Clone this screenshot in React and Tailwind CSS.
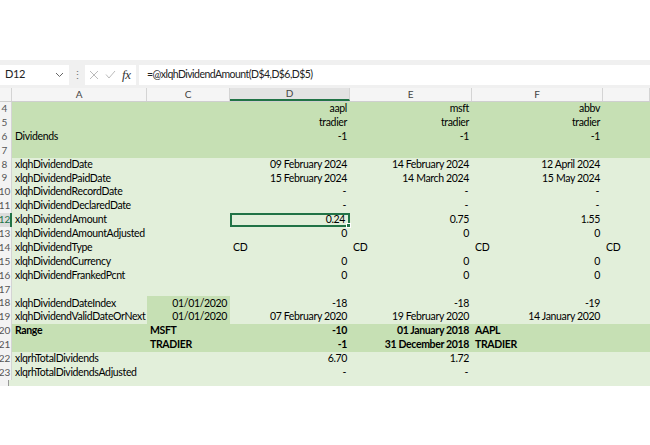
import React from 'react';

const FONT = "font-['Lato','Liberation_Sans',sans-serif]";

// column widths, left to right (B is hidden in the sheet)
const COLS = [
  { key: 'A', w: 'w-[135px]' },
  { key: 'C', w: 'w-[83px]' },
  { key: 'D', w: 'w-[120px]' },
  { key: 'E', w: 'w-[122px]' },
  { key: 'F', w: 'w-[131px]' },
  { key: 'G', w: 'flex-1' },
];

const r = (t, pad = 'pr-[3px]') => ({ t, cls: `justify-end ${pad}` });
const l = (t) => ({ t, cls: 'justify-start pl-[3px]' });
const dash = r('-', 'pr-[4px]');

const ROWS = [
  { n: 4, dark: true, D: r('aapl'), E: r('msft'), F: r('abbv') },
  { n: 5, dark: true, D: r('tradier'), E: r('tradier'), F: r('tradier') },
  { n: 6, dark: true, A: l('Dividends'), D: r('-1'), E: r('-1'), F: r('-1') },
  { n: 7, dark: true },
  { n: 8, A: l('xlqhDividendDate'), D: r('09 February 2024'), E: r('14 February 2024'), F: r('12 April 2024') },
  { n: 9, A: l('xlqhDividendPaidDate'), D: r('15 February 2024'), E: r('14 March 2024'), F: r('15 May 2024') },
  { n: 10, A: l('xlqhDividendRecordDate'), D: dash, E: dash, F: dash },
  { n: 11, A: l('xlqhDividendDeclaredDate'), D: dash, E: dash, F: dash },
  { n: 12, A: l('xlqhDividendAmount'), D: r('0.24'), E: r('0.75'), F: r('1.55'), selected: true },
  { n: 13, A: l('xlqhDividendAmountAdjusted'), D: r('0'), E: r('0'), F: r('0') },
  { n: 14, A: l('xlqhDividendType'), D: l('CD'), E: l('CD'), F: l('CD'), G: l('CD') },
  { n: 15, A: l('xlqhDividendCurrency'), D: r('0'), E: r('0'), F: r('0') },
  { n: 16, A: l('xlqhDividendFrankedPcnt'), D: r('0'), E: r('0'), F: r('0') },
  { n: 17 },
  { n: 18, A: l('xlqhDividendDateIndex'), C: r('01/01/2020'), cDark: true, D: r('-18'), E: r('-18'), F: r('-19') },
  { n: 19, A: l('xlqhDividendValidDateOrNext'), C: r('01/01/2020'), cDark: true, D: r('07 February 2020'), E: r('19 February 2020'), F: r('14 January 2020') },
  { n: 20, dark: true, bold: true, A: l('Range'), C: l('MSFT'), D: r('-10'), E: r('01 January 2018'), F: l('AAPL') },
  { n: 21, dark: true, bold: true, C: l('TRADIER'), D: r('-1'), E: r('31 December 2018'), F: l('TRADIER') },
  { n: 22, A: l('xlqrhTotalDividends'), D: r('6.70'), E: r('1.72') },
  { n: 23, A: l('xlqrhTotalDividendsAdjusted'), D: dash, E: dash },
];

const FormulaBar = () => (
  <div className="flex h-[28px] items-center bg-[#f0f0f0] pt-[1px]">
    <div className="flex h-[20px] w-[69px] items-center justify-between bg-white pl-[5px] pr-[5px]">
      <span className="text-[11px] text-[#222]">D12</span>
      <svg width="9" height="6" viewBox="0 0 9 6" fill="none" stroke="#666" strokeWidth="1">
        <path d="M1 1l3.5 3.5L8 1" />
      </svg>
    </div>
    <span className="w-[16px] text-center text-[11px] leading-none text-[#777]">⋮</span>
    <div className="flex h-[20px] w-[51px] items-center gap-[6px] bg-white pl-[4px]">
      <svg width="10" height="10" viewBox="0 0 10 10" stroke="#bbb" strokeWidth="1">
        <path d="M1 1l8 8M9 1l-8 8" />
      </svg>
      <svg width="11" height="9" viewBox="0 0 11 9" fill="none" stroke="#bbb" strokeWidth="1">
        <path d="M1 4.5l3 3.5L10 1" />
      </svg>
      <span className="font-['Liberation_Serif',serif] text-[13px] italic leading-none text-[#333]">fx</span>
    </div>
    <div className="ml-[3px] flex h-[20px] flex-1 items-center bg-white pl-[8px]">
      <span className="text-[10.5px] tracking-[-0.55px] text-[#222]">=@xlqhDividendAmount(D$4,D$6,D$5)</span>
    </div>
  </div>
);

const ColumnHeaders = () => (
  <div className="flex h-[14px] border-b border-[#cfcfcf] bg-[#f5f5f5] text-[10px] text-[#444]">
    <div className="w-[12px] border-r border-[#d4d4d4]" />
    {COLS.map((c) => (
      <div
        key={c.key}
        className={`${c.w} flex items-center justify-center border-r border-[#d4d4d4] ${
          c.key === 'D' ? 'border-b-2 border-b-[#217346] bg-[#e3e3e3]' : ''
        }`}
      >
        {c.key === 'G' ? '' : c.key}
      </div>
    ))}
  </div>
);

const Row = ({ row }) => (
  <div className={`flex h-[13.9px] ${row.dark ? 'bg-[#c6e0b4]' : 'bg-[#e2efda]'} ${row.bold ? 'font-bold' : ''}`}>
    <div
      className={`w-[12px] shrink-0 overflow-hidden border-r ${
        row.selected ? 'border-r-2 border-r-[#217346] bg-[#dcdcdc] text-[#217346]' : 'border-[#d4d4d4] bg-[#f3f3f3] text-[#555]'
      }`}
    >
      <div className="ml-[-5px] w-[19px] text-center text-[10px] font-normal tracking-normal leading-[13.9px]">{row.n}</div>
    </div>
    {COLS.map((c) => {
      const cell = row[c.key];
      const isSel = row.selected && c.key === 'D';
      return (
        <div
          key={c.key}
          className={`${c.w} relative flex items-center whitespace-nowrap ${cell ? cell.cls : ''} ${
            c.key === 'C' && row.cDark ? 'bg-[#c6e0b4]' : ''
          } ${isSel ? 'border-2 border-[#217346]' : ''}`}
        >
          {cell && cell.t}
          {isSel && <span className="absolute -bottom-[3px] -right-[3px] h-[5px] w-[5px] border border-white bg-[#217346]" />}
        </div>
      );
    })}
  </div>
);

export default function App() {
  return (
    <div className={`h-[445px] w-[650px] overflow-hidden bg-white ${FONT} text-[10.5px] tracking-[-0.35px] text-black`}>
      <div className="h-[60px]" />
      <FormulaBar />
      <ColumnHeaders />
      {ROWS.map((row) => (
        <Row key={row.n} row={row} />
      ))}
      <div className="flex h-[6px] bg-[#e2efda]">
        <div className="w-[9px] border-r border-[#999] bg-[#f3f3f3]" />
      </div>
    </div>
  );
}
